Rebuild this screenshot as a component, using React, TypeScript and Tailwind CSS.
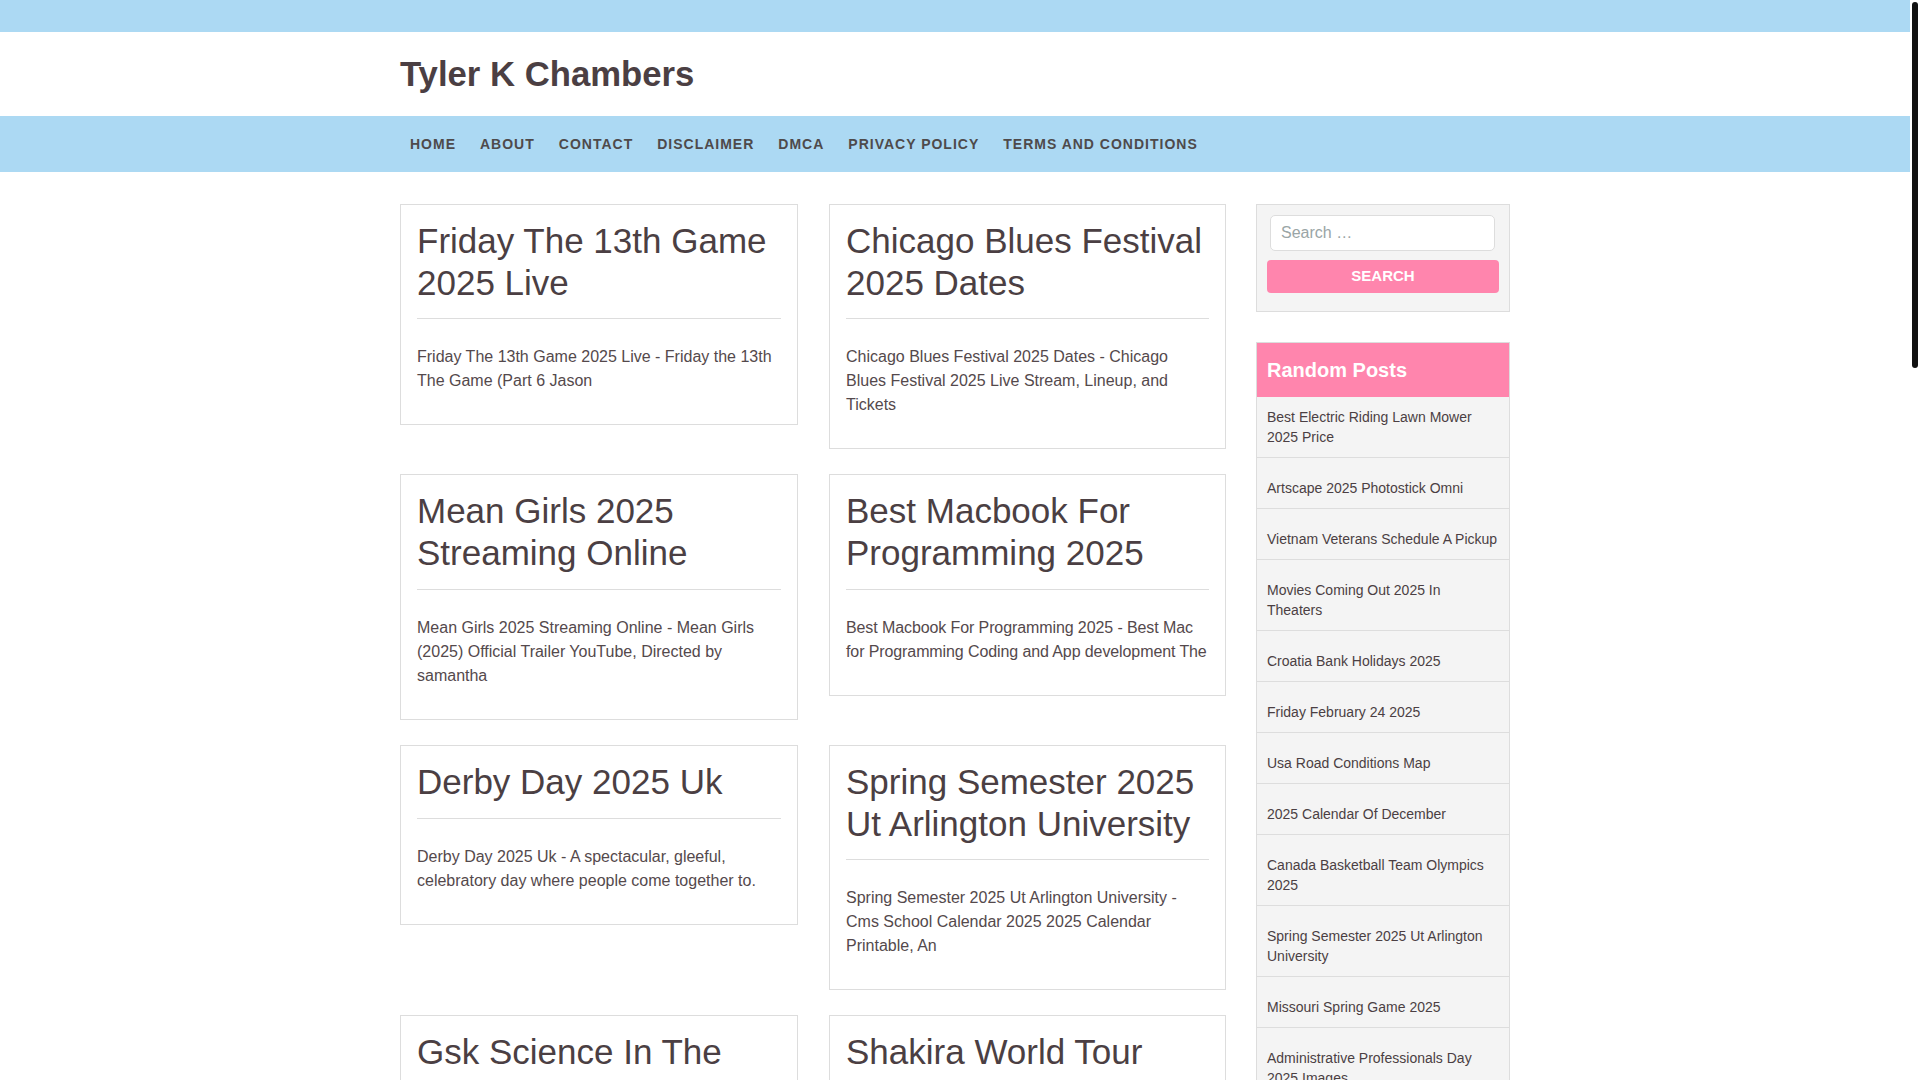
const navItems = [
  "Home",
  "About",
  "Contact",
  "Disclaimer",
  "DMCA",
  "Privacy Policy",
  "Terms and Conditions",
];

type Post = { title: string; excerpt: string; tight?: boolean };

const posts: Post[] = [
  {
    title: "Friday The 13th Game 2025 Live",
    excerpt: "Friday The 13th Game 2025 Live - Friday the 13th The Game (Part 6 Jason",
  },
  {
    title: "Chicago Blues Festival 2025 Dates",
    excerpt:
      "Chicago Blues Festival 2025 Dates - Chicago Blues Festival 2025 Live Stream, Lineup, and Tickets",
  },
  {
    title: "Mean Girls 2025 Streaming Online",
    excerpt:
      "Mean Girls 2025 Streaming Online - Mean Girls (2025) Official Trailer YouTube, Directed by samantha",
  },
  {
    title: "Best Macbook For Programming 2025",
    excerpt:
      "Best Macbook For Programming 2025 - Best Mac for Programming Coding and App development The",
    tight: true,
  },
  {
    title: "Derby Day 2025 Uk",
    excerpt:
      "Derby Day 2025 Uk - A spectacular, gleeful, celebratory day where people come together to.",
  },
  {
    title: "Spring Semester 2025 Ut Arlington University",
    excerpt:
      "Spring Semester 2025 Ut Arlington University - Cms School Calendar 2025 2025 Calendar Printable, An",
  },
  {
    title: "Gsk Science In The Summer 2025",
    excerpt: "Gsk Science In The Summer 2025 - Science in the Summer program",
  },
  {
    title: "Shakira World Tour 2025 Usa",
    excerpt: "Shakira World Tour 2025 Usa - Tour dates and tickets",
  },
];

const randomPosts = [
  "Best Electric Riding Lawn Mower 2025 Price",
  "Artscape 2025 Photostick Omni",
  "Vietnam Veterans Schedule A Pickup",
  "Movies Coming Out 2025 In Theaters",
  "Croatia Bank Holidays 2025",
  "Friday February 24 2025",
  "Usa Road Conditions Map",
  "2025 Calendar Of December",
  "Canada Basketball Team Olympics 2025",
  "Spring Semester 2025 Ut Arlington University",
  "Missouri Spring Game 2025",
  "Administrative Professionals Day 2025 Images",
];

function PostCard({ title, excerpt, tight }: Post) {
  return (
    <article className="border border-[#dddddd] bg-white px-4 pt-[15px] pb-[31px]">
      <h2 className="border-b border-[#dddddd] pb-[15px] text-[35px] leading-[41.7px] font-normal text-[#4b3f43]">
        {title}
      </h2>
      <p
        className={`mt-[26px] text-[16px] leading-[24px] text-[#54494c] ${
          tight ? "tracking-[-0.1px]" : ""
        }`}
      >
        {excerpt}
      </p>
    </article>
  );
}

export default function App() {
  return (
    <div className="flex h-[1080px] overflow-hidden bg-white font-['Liberation_Sans',Arial,sans-serif]">
      <div className="w-[1910px] shrink-0">
        <div className="h-[32px] bg-[#acd9f3]" />

        <header className="flex h-[84px] items-center">
          <div className="mx-auto w-[1110px]">
            <h1 className="text-[34.7px] leading-none font-bold text-[#4b3f43]">Tyler K Chambers</h1>
          </div>
        </header>

        <nav className="h-[56px] bg-[#acd9f3]">
          <ul className="mx-auto flex h-full w-[1110px] items-center gap-[24px] pl-[10px]">
            {navItems.map((item) => (
              <li
                key={item}
                className="text-[14px] font-bold tracking-[1px] text-[#4e4a4b] uppercase"
              >
                {item}
              </li>
            ))}
          </ul>
        </nav>

        <main className="mx-auto mt-[32px] flex w-[1110px] items-start gap-[30px]">
          <div className="grid grid-cols-[398px_397px] items-start gap-x-[31px] gap-y-[25px]">
            {posts.map((post) => (
              <PostCard key={post.title} {...post} />
            ))}
          </div>

          <aside className="w-[254px] shrink-0">
            <section className="border border-[#dddddd] bg-[#f4f4f4] p-[10px] pb-[18px]">
              <input
                type="search"
                placeholder="Search …"
                className="ml-[3px] block h-[36px] w-[225px] rounded-[5px] border border-[#dddddd] bg-white px-[10px] text-[16px] text-[#4b3f43] outline-none placeholder:text-[#9aa5a6]"
              />
              <button className="mt-[9px] block h-[33px] w-full rounded-[4px] bg-[#ff85ad] text-[15px] font-bold text-white uppercase">
                Search
              </button>
            </section>

            <section className="mt-[30px] border border-[#dddddd] bg-[#f4f4f4]">
              <h3 className="flex h-[54px] items-center bg-[#ff85ad] px-[10px] text-[20px] font-bold text-white">
                Random Posts
              </h3>
              <ul>
                {randomPosts.map((item, i) => (
                  <li
                    key={item}
                    className={`border-b border-[#dddddd] px-[10px] pb-[10px] text-[14px] leading-[20px] text-[#4b3f43] ${
                      i === 0 ? "pt-[10px]" : "pt-[20px]"
                    }`}
                  >
                    {item}
                  </li>
                ))}
              </ul>
            </section>
          </aside>
        </main>
      </div>

      {/* scrollbar as seen in the screenshot */}
      <div className="w-[10px] shrink-0 pt-[2px] pl-[2px]">
        <div className="h-[366px] w-[6px] rounded-full bg-[#111111]" />
      </div>
    </div>
  );
}
